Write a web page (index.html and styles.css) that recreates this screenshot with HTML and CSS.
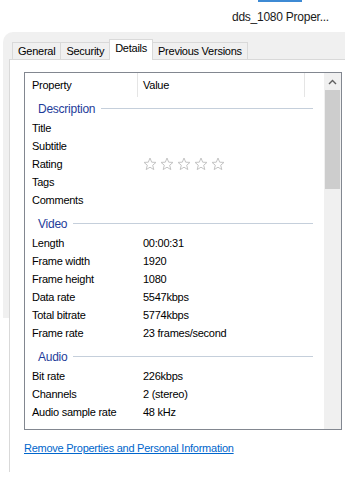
FILE: index.html
```html
<!DOCTYPE html>
<html lang="en">
	<head>
		<meta charset="UTF-8" />
		<meta name="viewport" content="width=device-width, initial-scale=1.0" />
		<title>Properties - Details</title>
		<link rel="stylesheet" href="styles.css">
	</head>
	<body>
		<div class="caption">
			<div class="caption-bar"></div>
			<div class="caption-text">dds_1080 Proper...</div>
		</div>
		<div class="dialog">
			<div class="tabs">
				<div class="tab">General</div>
				<div class="tab">Security</div>
				<div class="tab active">Details</div>
				<div class="tab">Previous Versions</div>
			</div>
			<div class="page">
				<div class="listbox">
					<div class="list">
						<div class="header">
							<div class="col-prop">Property</div>
							<div class="col-val">Value</div>
						</div>
						<div class="group first"><span>Description</span></div>
						<div class="row"><div class="prop">Title</div><div class="val"></div></div>
						<div class="row"><div class="prop">Subtitle</div><div class="val"></div></div>
						<div class="row">
							<div class="prop">Rating</div>
							<div class="val stars">
								<svg viewBox="0 0 14 14"><polygon points="7,1 8.7,5.2 13,5.4 9.7,8.2 10.8,12.6 7,10.2 3.2,12.6 4.3,8.2 1,5.4 5.3,5.2" /></svg>
								<svg viewBox="0 0 14 14"><polygon points="7,1 8.7,5.2 13,5.4 9.7,8.2 10.8,12.6 7,10.2 3.2,12.6 4.3,8.2 1,5.4 5.3,5.2" /></svg>
								<svg viewBox="0 0 14 14"><polygon points="7,1 8.7,5.2 13,5.4 9.7,8.2 10.8,12.6 7,10.2 3.2,12.6 4.3,8.2 1,5.4 5.3,5.2" /></svg>
								<svg viewBox="0 0 14 14"><polygon points="7,1 8.7,5.2 13,5.4 9.7,8.2 10.8,12.6 7,10.2 3.2,12.6 4.3,8.2 1,5.4 5.3,5.2" /></svg>
								<svg viewBox="0 0 14 14"><polygon points="7,1 8.7,5.2 13,5.4 9.7,8.2 10.8,12.6 7,10.2 3.2,12.6 4.3,8.2 1,5.4 5.3,5.2" /></svg>
							</div>
						</div>
						<div class="row"><div class="prop">Tags</div><div class="val"></div></div>
						<div class="row"><div class="prop">Comments</div><div class="val"></div></div>
						<div class="group"><span>Video</span></div>
						<div class="row"><div class="prop">Length</div><div class="val">00:00:31</div></div>
						<div class="row"><div class="prop">Frame width</div><div class="val">1920</div></div>
						<div class="row"><div class="prop">Frame height</div><div class="val">1080</div></div>
						<div class="row"><div class="prop">Data rate</div><div class="val">5547kbps</div></div>
						<div class="row"><div class="prop">Total bitrate</div><div class="val">5774kbps</div></div>
						<div class="row"><div class="prop">Frame rate</div><div class="val">23 frames/second</div></div>
						<div class="group"><span>Audio</span></div>
						<div class="row"><div class="prop">Bit rate</div><div class="val">226kbps</div></div>
						<div class="row"><div class="prop">Channels</div><div class="val">2 (stereo)</div></div>
						<div class="row"><div class="prop">Audio sample rate</div><div class="val">48 kHz</div></div>
						<div class="row"><div class="prop"></div><div class="val"></div></div>
					</div>
					<div class="scrollbar">
						<div class="arrow">
							<svg viewBox="0 0 9 6"><polyline points="1,5 4.5,1.5 8,5" /></svg>
						</div>
						<div class="thumb"></div>
						<div class="track"></div>
					</div>
				</div>
				<a class="remove" href="#">Remove Properties and Personal Information</a>
			</div>
		</div>
	</body>
</html>
```

FILE: styles.css
```css
body {
	font-family: "Liberation Sans", Arial, sans-serif;
	font-size: 11px;
	letter-spacing: -0.25px;
	color: #000;
	background-color: #fff;
	margin: 0;
	overflow: hidden;
}
.caption {
	height: 32px;
}
.caption-bar {
	width: 44px;
	height: 2px;
	margin-left: 258px;
	background-color: #3d8ad4;
}
.caption-text {
	margin: 8px 0 0 232px;
	font-size: 12px;
	line-height: 14px;
	color: #1a1a1a;
}
.dialog {
	margin-left: 3px;
	width: 342px;
	background: linear-gradient(#f0f0f0, #f0f0f0) no-repeat;
	background-size: 100% 286px;
	border-top-left-radius: 10px;
	padding-top: 7px;
}
.tabs {
	display: flex;
	align-items: flex-end;
	padding-left: 9px;
	height: 20px;
}
.tab {
	height: 16px;
	line-height: 16px;
	padding: 0 5px;
	border: 1px solid #d9d9d9;
	border-bottom: none;
	margin-right: -1px;
	background-color: #f0f0f0;
}
.tab.active {
	height: 20px;
	line-height: 16px;
	background-color: #fff;
	position: relative;
	z-index: 1;
	margin-bottom: -1px;
}
.page {
	margin-left: 6px;
	background-color: #fff;
	border-top: 1px solid #d9d9d9;
	border-left: 1px solid #d9d9d9;
	height: 400px;
	padding-top: 12px;
}
.listbox {
	display: flex;
	margin-left: 14px;
	width: 316px;
	height: 356px;
	border: 1px solid #828790;
}
.list {
	flex: 1;
	overflow: hidden;
}
.header {
	display: flex;
	height: 24px;
	line-height: 24px;
}
.col-prop {
	width: 105px;
	padding-left: 7px;
	border-right: 1px solid #e5e5e5;
}
.col-val {
	width: 161px;
	padding-left: 5px;
	border-right: 1px solid #e5e5e5;
}
.group {
	display: flex;
	align-items: center;
	height: 21px;
	padding: 1px 11px 0 13px;
	margin-top: 3px;
	color: #1e3c9a;
	font-size: 12px;
}
.group.first {
	margin-top: 0;
}
.group::after {
	content: "";
	flex: 1;
	height: 1px;
	margin-left: 6px;
	background-color: #c5cfdb;
}
.row {
	display: flex;
	height: 18px;
	line-height: 18px;
}
.prop {
	width: 111px;
	padding-left: 7px;
	flex-shrink: 0;
}
.val {
	flex: 1;
}
.stars {
	display: flex;
	align-items: center;
	gap: 3px;
}
.stars svg {
	width: 14px;
	height: 14px;
	fill: none;
	stroke: #c4c4c4;
	stroke-width: 1;
}
.scrollbar {
	width: 17px;
	display: flex;
	flex-direction: column;
	background-color: #f0f0f0;
}
.arrow {
	height: 17px;
	display: flex;
	align-items: center;
	justify-content: center;
}
.arrow svg {
	width: 9px;
	height: 6px;
	fill: none;
	stroke: #606060;
	stroke-width: 1.4;
}
.thumb {
	height: 99px;
	margin: 0 1px;
	background-color: #cdcdcd;
}
.track {
	flex: 1;
}
.remove {
	display: block;
	margin: 11px 0 0 14px;
	width: max-content;
	line-height: 14px;
	color: #0066cc;
	text-decoration: underline;
}
```
